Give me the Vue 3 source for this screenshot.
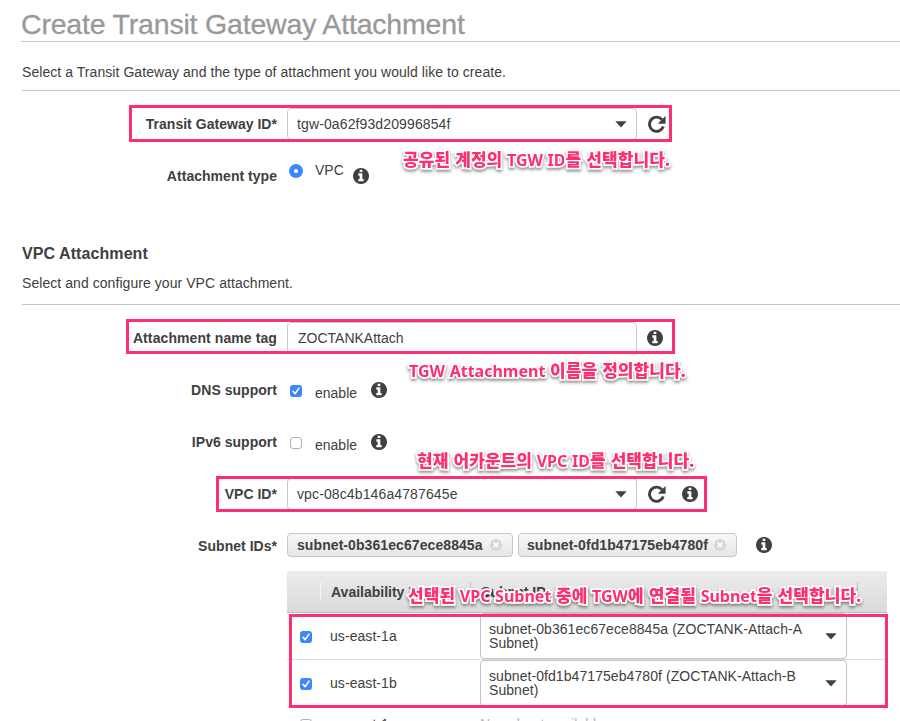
<script setup>
import { h } from 'vue'

const infoPath = 'M1152 1376v-160q0-14-9-23t-23-9h-96v-512q0-14-9-23t-23-9h-320q-14 0-23 9t-9 23v160q0 14 9 23t23 9h96v320h-96q-14 0-23 9t-9 23v160q0 14 9 23t23 9h448q14 0 23-9t9-23zm-128-896v-160q0-14-9-23t-23-9h-192q-14 0-23 9t-9 23v160q0 14 9 23t23 9h192q14 0 23-9t9-23zm640 416q0 209-103 385.500t-279.500 279.500-385.500 103-385.500-103-279.500-279.500-103-385.500 103-385.500 279.500-279.500 385.500-103 385.500 103 279.500 279.500 103 385.500z'

const InfoIcon = () =>
  h('svg', { width: 16, height: 16, viewBox: '128 128 1536 1536' }, [h('path', { d: infoPath, fill: '#404040' })])
const ReloadIcon = () =>
  h('svg', { width: 18, height: 18, viewBox: '0 0 18 18' }, [
    h('path', { d: 'M14 4.6A7.1 7.1 0 1 0 15.3 11.6', fill: 'none', stroke: '#404040', 'stroke-width': 2.9 }),
    h('path', { d: 'M17.3 1.4V8.4H10.3L12.6 6.1L15 3.7Z', fill: '#404040', stroke: '#404040', 'stroke-width': 0.5, 'stroke-linejoin': 'round' })
  ])
const Caret = () =>
  h('svg', { width: 12, height: 7, viewBox: '0 0 12 7' }, [h('path', { d: 'M0.3 0.3H11.7L6 6.6Z', fill: '#404040' })])
const Tick = () =>
  h('svg', { width: 12, height: 12, viewBox: '0 0 12 12' }, [
    h('path', { d: 'M3 6.3L5.1 8.6L9 3.2', fill: 'none', stroke: '#fff', 'stroke-width': 1.6, 'stroke-linecap': 'round', 'stroke-linejoin': 'round' })
  ])

const chips = [
  { id: 'subnet-0b361ec67ece8845a', cls: 'chip-a' },
  { id: 'subnet-0fd1b47175eb4780f', cls: 'chip-b' }
]
const zones = [
  { zone: 'us-east-1a', first: 'subnet-0b361ec67ece8845a (ZOCTANK-Attach-A' },
  { zone: 'us-east-1b', first: 'subnet-0fd1b47175eb4780f (ZOCTANK-Attach-B' }
]
</script>

<template>
  <div class="page">
    <h1>Create Transit Gateway Attachment</h1>
    <p class="intro">Select a Transit Gateway and the type of attachment you would like to create.</p>

    <div class="row first">
      <label class="label">Transit Gateway ID*</label>
      <div class="field"><span>tgw-0a62f93d20996854f</span><Caret /></div>
      <ReloadIcon class="reload" />
    </div>
    <div class="row">
      <label class="label">Attachment type</label>
      <i class="radio"></i>
      <span class="opt vpc">VPC</span>
      <InfoIcon class="info-type" />
    </div>

    <h2>VPC Attachment</h2>
    <p class="sub">Select and configure your VPC attachment.</p>

    <div class="row second">
      <label class="label wide">Attachment name tag</label>
      <div class="field plain"><span>ZOCTANKAttach</span></div>
      <InfoIcon class="info-name" />
    </div>
    <div class="row">
      <label class="label">DNS support</label>
      <i class="check on"><Tick /></i>
      <span class="opt">enable</span>
      <InfoIcon class="info-opt" />
    </div>
    <div class="row">
      <label class="label">IPv6 support</label>
      <i class="check"></i>
      <span class="opt">enable</span>
      <InfoIcon class="info-opt" />
    </div>
    <div class="row">
      <label class="label">VPC ID*</label>
      <div class="field"><span>vpc-08c4b146a4787645e</span><Caret /></div>
      <ReloadIcon class="reload" />
      <InfoIcon class="info-vpc" />
    </div>
    <div class="row chips-row">
      <label class="label">Subnet IDs*</label>
      <div v-for="c in chips" :key="c.id" class="chip" :class="c.cls">
        <span>{{ c.id }}</span>
        <svg width="12" height="12" viewBox="0 0 12 12">
          <circle cx="6" cy="6" r="6" fill="#d6d6d6" />
          <path d="M3.6 3.6L8.4 8.4M8.4 3.6L3.6 8.4" stroke="#fff" stroke-width="1.7" />
        </svg>
      </div>
      <InfoIcon class="info-chips" />
    </div>

    <div class="table">
      <div class="thead">
        <span class="th pick"></span>
        <span class="th zone">Availability Zone</span>
        <span class="th subnet">Subnet ID</span>
      </div>
      <div v-for="z in zones" :key="z.zone" class="tr">
        <i class="check on"><Tick /></i>
        <span class="zone-name">{{ z.zone }}</span>
        <div class="picker">
          <span>{{ z.first }}<br />Subnet)</span>
          <Caret />
        </div>
      </div>
      <div class="tr last">
        <i class="check"></i>
        <span class="zone-name">us-east-1c</span>
        <span class="none">No subnet available</span>
      </div>
    </div>

    <div class="mark m1"></div>
    <div class="mark m2"></div>
    <div class="mark m3"></div>
    <div class="mark m4"></div>
    <div class="note n1"><b>공유된 계정의</b> TGW ID<b>를 선택합니다.</b></div>
    <div class="note n2">TGW Attachment <b>이름을 정의합니다.</b></div>
    <div class="note n3"><b>현재 어카운트의</b> VPC ID<b>를 선택합니다.</b></div>
    <div class="note n4"><b>선택된</b> VPC Subnet <b>중에</b> TGW<b>에 연결될</b> Subnet<b>을 선택합니다.</b></div>
  </div>
</template>

<style>
body { background: #fff; overflow: hidden; }
</style>

<style scoped>
.page {
  position: relative;
  box-sizing: border-box;
  width: 900px;
  height: 721px;
  overflow: hidden;
  padding-left: 22px;
  font: 14px/16px "Liberation Sans", Arial, sans-serif;
  letter-spacing: 0.06px;
  color: #404040;
  background: #fff;
}
h1, h2, p { margin: 0; }
h1 {
  box-sizing: border-box;
  height: 42px;
  margin-left: -1px;
  padding-top: 8px;
  border-bottom: 1px solid #c4c4c4;
  font-size: 28.5px;
  line-height: 32px;
  font-weight: 400;
  letter-spacing: -0.19px;
  color: #999;
  -webkit-text-stroke: 0.3px #999;
}
.intro { box-sizing: border-box; height: 49px; padding-top: 22px; border-bottom: 1px solid #c4c4c4; }
h2 { height: 20px; padding-top: 43px; font-size: 16px; line-height: 18px; letter-spacing: 0.08px; }
.sub { box-sizing: border-box; height: 40px; padding-top: 10px; border-bottom: 1px solid #c4c4c4; }
.row { display: flex; align-items: center; height: 52px; }
.row.first { margin-top: 7px; }
.row.second { margin-top: 7px; }
.label { width: 255px; flex: none; text-align: right; font-weight: 700; letter-spacing: 0.03px; }
.label.wide { letter-spacing: 0.09px; }
.field {
  box-sizing: border-box;
  display: flex;
  flex: none;
  align-items: center;
  justify-content: space-between;
  width: 350px;
  height: 32px;
  margin-left: 10px;
  padding: 0 9px;
  border: 1px solid #c8c8c8;
  border-radius: 4px;
  letter-spacing: 0.12px;
}
.field.plain { padding-left: 10px; letter-spacing: 0; }
svg { display: block; flex: none; }
.reload { margin-left: 11px; }
.radio {
  box-sizing: border-box;
  width: 14px;
  height: 14px;
  margin: -10px 0 0 12px;
  border: 5px solid #3b88fd;
  border-radius: 50%;
  background: #fff;
}
.opt { width: 43px; margin: 6px 0 0 13px; letter-spacing: 0; }
.opt.vpc { width: 29px; margin: -12px 0 0 12px; }
.info-type { margin-left: 9px; }
.info-name { margin-left: 10px; }
.info-opt { margin-left: 13px; }
.info-vpc { margin-left: 16px; }
.check {
  box-sizing: border-box;
  display: block;
  flex: none;
  width: 12px;
  height: 12px;
  margin: 2px 0 0 13px;
  border: 1px solid #b0b0b0;
  border-radius: 3px;
  background: #fff;
}
.check.on { border: 0; background: #3b88fd; }
.chips-row { height: 51px; }
.chips-row > * { margin-top: -1px; }
.chips-row > .label { margin-top: 0; }
.chip {
  box-sizing: border-box;
  display: flex;
  align-items: center;
  justify-content: space-between;
  height: 24px;
  padding: 0 10px 0 9px;
  border: 1px solid #c8c8c8;
  border-radius: 4px;
  background: linear-gradient(#f7f7f7, #e6e6e6);
  font-weight: 700;
  letter-spacing: 0.08px;
}
.chip-a { width: 226px; margin-left: 10px; }
.chip-b { width: 219px; margin-left: 5px; padding-left: 8px; }
.info-chips { margin-left: 19px; }
.table { width: 600px; margin-left: 265px; }
.thead {
  box-sizing: border-box;
  display: flex;
  align-items: center;
  height: 42px;
  border-bottom: 1px solid #bdbdbd;
  background: linear-gradient(#ececec, #dadada);
  font-weight: 700;
  letter-spacing: 0;
}
.th { box-sizing: border-box; height: 19px; line-height: 21px; border-right: 1px solid #f6f6f6; }
.th.pick { width: 34px; }
.th.zone { width: 150px; padding-left: 10px; border-right-color: #c4c4c4; }
.th.subnet { width: 387px; padding-left: 10px; border-color: #c4c4c4; }
.tr { box-sizing: border-box; display: flex; align-items: center; height: 47px; border-bottom: 1px solid #dcdcdc; }
.zone-name { width: 150px; margin-left: 18px; }
.tr .check { margin-top: 1px; }
.picker {
  box-sizing: border-box;
  display: flex;
  align-items: center;
  justify-content: space-between;
  width: 367px;
  height: 46px;
  padding: 0 9px 0 8px;
  border: 1px solid #c4c4c4;
  border-radius: 4px;
  line-height: 14px;
  letter-spacing: 0.07px;
}
.picker span { margin-top: -1px; }
.tr.last { height: 34px; border: 0; }
.none { color: #b4b4b4; }
.mark { position: absolute; box-sizing: border-box; border: 3px solid #ff2f6e; }
.m1 { left: 129px; top: 105px; width: 543px; height: 37px; }
.m2 { left: 126px; top: 319px; width: 549px; height: 35px; }
.m3 { left: 216px; top: 476px; width: 491px; height: 36px; }
.m4 { left: 289px; top: 614px; width: 599px; height: 94px; }
.note {
  position: absolute;
  white-space: nowrap;
  font: 700 16px/20px "Noto Sans", "Noto Sans CJK KR", sans-serif;
  letter-spacing: 0;
  word-spacing: 0.5px;
  color: #ff2f6e;
  -webkit-text-stroke: 3.5px #fff;
  paint-order: stroke fill;
  stroke-linejoin: round;
  filter: drop-shadow(0 2px 1.5px rgba(0, 0, 0, 0.42));
}
.note b { font-size: 17px; line-height: 20px; letter-spacing: 0.08px; }
.n1 { left: 403px; top: 150px; }
.n2 { left: 409px; top: 361px; }
.n3 { left: 417px; top: 451px; }
.n4 { left: 408px; top: 586px; }
</style>
